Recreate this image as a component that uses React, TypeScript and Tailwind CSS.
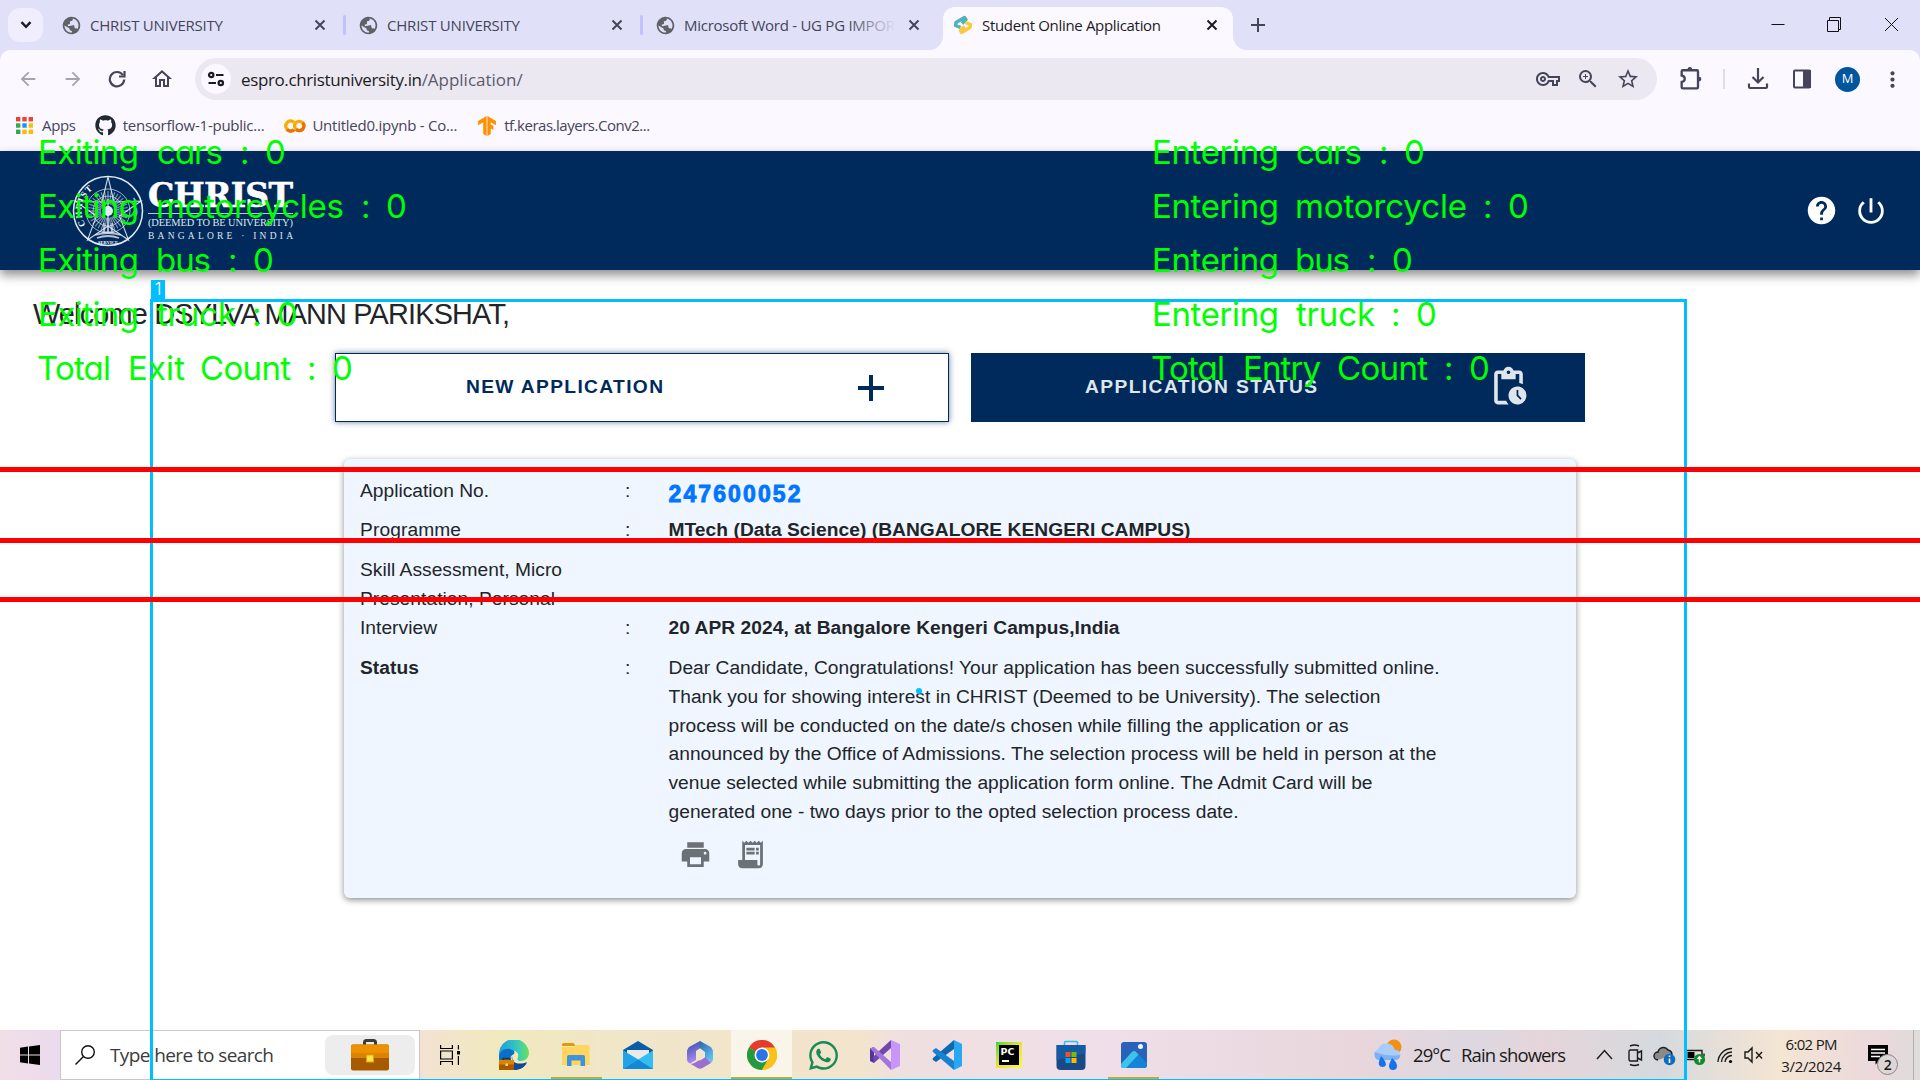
import { useLayoutEffect, useRef, useState, type ReactNode } from "react";
import {
  MdArrowBack,
  MdArrowForward,
  MdHelp,
  MdMoreVert,
  MdOutlineHome,
  MdOutlineVpnKey,
  MdPendingActions,
  MdPowerSettingsNew,
  MdPrint,
  MdPublic,
  MdReceiptLong,
  MdStarBorder,
  MdZoomIn,
} from "react-icons/md";
import { FaGithub, FaWhatsapp } from "react-icons/fa";
import { SiTensorflow } from "react-icons/si";

/** A single line of text tracked so that it spans exactly `w` pixels. */
function Fit({ w, className = "", children }: { w: number; className?: string; children: string }) {
  const ref = useRef<HTMLSpanElement>(null);
  const [spacing, setSpacing] = useState(0);
  useLayoutEffect(() => {
    const el = ref.current;
    if (!el) return;
    el.style.letterSpacing = "0px";
    const natural = el.getBoundingClientRect().width;
    const next = (w - natural) / Math.max(1, children.length - 1);
    el.style.letterSpacing = `${next}px`;
    setSpacing(next);
  }, [w, children]);
  return (
    <span ref={ref} className={`inline-block shrink-0 whitespace-pre ${className}`} style={{ letterSpacing: spacing }}>
      {children}
    </span>
  );
}

/* ---------- Browser chrome ---------- */

function CloseGlyph({ className }: { className: string }) {
  return (
    <svg viewBox="0 0 12 12" className={`size-3 shrink-0 ${className}`} fill="none" stroke="currentColor" strokeWidth="2">
      <path d="m1.500 1.500 9 9M10.500 1.500l-9 9" />
    </svg>
  );
}

function Tab({ title, w, fade }: { title: string; w: number; fade?: boolean }) {
  return (
    <div className="flex h-[50px] w-[294px] shrink-0 items-center pl-[12px] text-[#45455a]">
      <MdPublic className="size-[21px] -rotate-12 text-[#5f6368]" />
      <div className="relative ml-2 w-[212px] overflow-hidden text-[15px]">
        <Fit w={w}>{title}</Fit>
        {fade && <div className="absolute inset-y-0 right-0 w-12 bg-linear-to-r from-transparent to-[#e0e0f8]" />}
      </div>
      <CloseGlyph className="ml-[12px]" />
    </div>
  );
}

function TabStrip() {
  return (
    <div className="flex h-[50px] shrink-0 items-center bg-[#e0e0f8] pl-2">
      <div className="flex h-[34px] w-[35px] items-center justify-center rounded-xl bg-[#f0edff]">
        <svg viewBox="0 0 12 8" className="h-2 w-3" fill="none" stroke="#1b1b23" strokeWidth="2.4">
          <path d="M1.5 1.2 6 5.8l4.5-4.6" />
        </svg>
      </div>
      <div className="w-[6px]" />
      <Tab title="CHRIST UNIVERSITY" w={133} />
      <div className="h-5 w-[3px] rounded bg-[#c0c1ff]" />
      <Tab title="CHRIST UNIVERSITY" w={133} />
      <div className="h-5 w-[3px] rounded bg-[#c0c1ff]" />
      <Tab title="Microsoft Word - UG PG IMPOR" w={211} fade />
      <div className="relative mt-[7px] ml-[6px] flex h-[43px] w-[290px] items-center rounded-t-xl bg-[#fbf8ff] pb-[7px] pl-[10px] text-[#1b1b23]">
        <div className="absolute bottom-0 -left-[14px] size-[14px] bg-[#fbf8ff]">
          <div className="size-full rounded-br-[14px] bg-[#e0e0f8]" />
        </div>
        <div className="absolute -right-[14px] bottom-0 size-[14px] bg-[#fbf8ff]">
          <div className="size-full rounded-bl-[14px] bg-[#e0e0f8]" />
        </div>
        <svg viewBox="0 0 20 20" className="size-5" fill="none" strokeWidth="3.4" strokeLinejoin="round">
          <path d="M7.500 12.500 2.500 10.500 3 7.500 11.500 2.500 13 4.500 9 8.500" stroke="#4fb3bf" />
          <path d="m12.500 7.500 5 2-.5 3L8.500 17.500 7.500 15.500 11.500 11.500" stroke="#fdc83e" />
        </svg>
        <Fit w={179} className="ml-[9px] text-[15px]">
          Student Online Application
        </Fit>
        <CloseGlyph className="ml-[45px]" />
      </div>
      <svg viewBox="0 0 14 14" className="ml-[18px] size-[14px] shrink-0" stroke="#45455a" strokeWidth="2">
        <path d="M7 0v14M0 7h14" />
      </svg>
      <svg viewBox="0 0 140 20" className="ml-[499px] h-5 w-[140px] shrink-0" fill="none" stroke="#111">
        <path d="M7.5 9.5h13M63.5 5.5h11v11h-11zM65.5 5.5v-3h11v12h-2M121 3l13 13M134 3l-13 13" />
      </svg>
    </div>
  );
}

function Toolbar() {
  return (
    <div className="flex h-[58px] shrink-0 items-center rounded-t-[10px] bg-[#fbf8ff] text-[#45455a]">
      <MdArrowBack className="ml-[17px] size-[22px] text-[#a5a3b0]" />
      <MdArrowForward className="ml-[23px] size-[22px] text-[#a5a3b0]" />
      <svg viewBox="0 0 18 18" className="ml-[24px] size-[18px] shrink-0" fill="none" stroke="currentColor" strokeWidth="2.200">
        <path d="M15 5.200A7.200 7.200 0 1 0 16.200 9.500" />
        <path d="M16.500 1v5.500H11" />
      </svg>
      <MdOutlineHome className="ml-[24px] size-[24px] shrink-0" />
      <div className="ml-[21px] flex h-[42px] w-[1462px] shrink-0 items-center rounded-full bg-[#ebe8f2]">
        <div className="ml-[6px] flex size-[30px] shrink-0 items-center justify-center rounded-full bg-[#fbf8ff]">
          <svg viewBox="0 0 18 16" className="h-4 w-[18px]" fill="none" stroke="#1b1b23" strokeWidth="2.2">
            <circle cx="4.2" cy="4" r="2.2" />
            <path d="M9 4h7.5M1.5 12H9" />
            <circle cx="13.8" cy="12" r="2.2" />
          </svg>
        </div>
        <div className="mt-[2px] ml-[10px] flex w-[283px] shrink-0 text-[17px] leading-6">
          <Fit w={181} className="text-[#1b1b23]">
            espro.christuniversity.in
          </Fit>
          <Fit w={101} className="text-[#5c5a6b]">
            /Application/
          </Fit>
        </div>
        <MdOutlineVpnKey className="ml-[1012px] size-6 shrink-0" />
        <MdZoomIn className="ml-[16px] size-6 shrink-0" />
        <MdStarBorder className="ml-[16px] size-6 shrink-0" />
      </div>
      <svg viewBox="0 0 24 24" className="ml-[20px] size-[28px] shrink-0" fill="none" stroke="currentColor" strokeWidth="2">
        <path d="M5 4.500h12a1 1 0 0 1 1 1V19a1 1 0 0 1-1 1H5a1 1 0 0 1-1-1v-4.500c3.500-.5 3.500-5 0-5.500V5.500a1 1 0 0 1 1-1z" />
        <path d="M9 4a2 2.300 0 0 1 4 0zM18.500 10a2.300 2 0 0 1 0 4z" fill="currentColor" stroke="none" />
      </svg>
      <div className="ml-[18px] h-5 w-[2px] shrink-0 bg-[#dcdcf8]" />
      <svg viewBox="0 0 22 22" className="ml-[22px] size-[22px] shrink-0" fill="none" stroke="currentColor" strokeWidth="2.2">
        <path d="M11 0v14M5.500 9l5.500 5.500L16.500 9M2 15.500V19a1 1 0 0 0 1 1h16a1 1 0 0 0 1-1v-3.500" />
      </svg>
      <svg viewBox="0 0 20 20" className="ml-[23px] size-5 shrink-0" fill="none" stroke="currentColor" strokeWidth="2">
        <rect x="2" y="1.500" width="16" height="17" rx="1" />
        <path d="M12 2h6v16h-6z" fill="currentColor" />
      </svg>
      <div className="ml-[23px] flex size-[25px] shrink-0 items-center justify-center rounded-full bg-[#00569e] text-[13px] text-white">
        M
      </div>
      <MdMoreVert className="ml-[20px] size-[25px] shrink-0" />
    </div>
  );
}

function Bookmarks() {
  const dots = ["#ea4335", "#ea4335", "#ea4335", "#34a853", "#1a90ff", "#fbbc04", "#34a853", "#fbbc04", "#fbbc04"];
  return (
    <div className="flex h-[43px] shrink-0 items-center bg-[#fbf8ff] pb-[8px] text-[15px] text-[#45455a]">
      <svg viewBox="0 0 17 17" className="ml-[16px] size-[17px]">
        {dots.map((c, i) => (
          <rect key={i} x={(i % 3) * 6.3} y={Math.floor(i / 3) * 6.3} width="4.400" height="4.400" fill={c} />
        ))}
      </svg>
      <Fit w={34} className="ml-[9px]">
        Apps
      </Fit>
      <FaGithub className="ml-[19px] size-[21px] text-[#24292f]" />
      <Fit w={142} className="ml-[7px]">
        tensorflow-1-public...
      </Fit>
      <svg viewBox="0 0 22 14" className="ml-[20px] h-[14px] w-[22px]" fill="none" strokeWidth="3.400">
        <path d="M10 3.200A5 5 0 1 0 10 10.800" stroke="#f9ab00" />
        <circle cx="15.200" cy="7" r="4.600" stroke="#f9ab00" />
        <path d="M12 10.300A4.600 4.600 0 0 0 18.500 3.700M3 10.300a5 5 0 0 0 7 .5" stroke="#e8710a" />
      </svg>
      <Fit w={145} className="ml-[6px]">
        Untitled0.ipynb - Co...
      </Fit>
      <SiTensorflow className="ml-[20px] size-5 text-[#ff9100]" />
      <Fit w={146} className="ml-[7px]">
        tf.keras.layers.Conv2...
      </Fit>
    </div>
  );
}

/* ---------- University portal ---------- */

function Seal() {
  const rays = Array.from({ length: 36 }, (_, i) => i * 10);
  return (
    <svg viewBox="-36 -36 72 72" className="size-[72px] shrink-0" fill="none" stroke="#e4eaf2">
      <circle r="34.500" strokeWidth="1.500" />
      <circle r="22" strokeWidth="0.900" opacity="0.8" />
      <circle r="15" strokeWidth="0.800" opacity="0.8" />
      {rays.map((a) => (
        <path key={a} d="M0-7V-20" strokeWidth="1.200" opacity="0.55" transform={`rotate(${a})`} />
      ))}
      <path d="M0-34 6-9 33-10 11.500 5 20.500 29 0 15-20.500 29-11.500 5-33-10-6-9z" strokeWidth="1.100" opacity="0.9" />
      <path d="M0-12v24M-4 12v9M0 12v9M4 12v9M-6 21H6" strokeWidth="1.200" />
      <circle r="5" fill="#e4eaf2" stroke="none" />
      <path d="M-13 24q13-4 26 0M-11 27q11-4 22 0" strokeWidth="1.800" opacity="0.8" />
      <path id="sealLeft" d="M-22.500 14A26.500 26.500 0 0 1-12-23.600" stroke="none" />
      <g fill="#fff" stroke="none" fontFamily="Liberation Serif" fontWeight="700" fontSize="9">
        <text>
          <textPath href="#sealLeft" textLength="40">
            CHRIST
          </textPath>
        </text>
        <text y="32.500" fontSize="4.500" textAnchor="middle">
          SERVICE
        </text>
      </g>
      <path d="M25.500-13q4 4 1 8M28-3q2 5-1 9" strokeWidth="1.600" opacity="0.7" />
    </svg>
  );
}

function PortalHeader() {
  return (
    <header className="z-10 flex h-[119px] shrink-0 items-center bg-[#002a5c] pl-[72px] text-white shadow-[0_5px_10px_rgba(0,0,0,0.45)]">
      <Seal />
      <div className="mt-[2px] ml-1 flex w-[146px] shrink-0 flex-col items-start font-['DejaVu_Serif',serif]">
        <Fit w={145} className="text-[33px] leading-[30px] font-bold [-webkit-text-stroke:0.6px_white]">
          CHRIST
        </Fit>
        <div className="mt-[2px] h-px w-[145px] bg-[#b8c6d8]" />
        <Fit w={145} className="mt-[1px] font-['Liberation_Serif',serif] text-[10.400px] leading-[15px] text-[#dfe6ee]">
          (DEEMED TO BE UNIVERSITY)
        </Fit>
        <Fit w={145} className="font-['Liberation_Serif',serif] text-[9.500px] leading-[12px] text-[#dfe6ee]">
          BANGALORE · INDIA
        </Fit>
      </div>
      <MdHelp className="ml-[1511px] size-[33px] shrink-0" />
      <MdPowerSettingsNew className="ml-[16px] size-[34px] shrink-0" />
    </header>
  );
}

const statusLines: [string, number][] = [
  ["Dear Candidate, Congratulations! Your application has been successfully submitted online.", 771],
  ["Thank you for showing interest in CHRIST (Deemed to be University). The selection", 712],
  ["process will be conducted on the date/s chosen while filling the application or as", 680],
  ["announced by the Office of Admissions. The selection process will be held in person at the", 768],
  ["venue selected while submitting the application form online. The Admit Card will be", 704],
  ["generated one - two days prior to the opted selection process date.", 570],
];

function Row({
  label,
  colonClass = "",
  className,
  children,
}: {
  label: ReactNode;
  colonClass?: string;
  className: string;
  children: ReactNode;
}) {
  return (
    <div className={`flex shrink-0 ${className}`}>
      <div className="flex w-[265px] flex-col items-start">{label}</div>
      <span className={`w-[43.500px] shrink-0 ${colonClass}`}>:</span>
      {children}
    </div>
  );
}

function Portal() {
  return (
    <div className="flex h-[879px] shrink-0 flex-col bg-white font-['Liberation_Sans',Arial,sans-serif] text-[#212529]">
      <PortalHeader />
      <Fit w={477} className="mt-[28px] ml-[33px] self-start text-[28.8px] leading-8">
        Welcome DSYLVA MANN PARIKSHAT,
      </Fit>
      <div className="mt-[23px] ml-[335px] flex gap-[22px] text-[19.2px] font-bold">
        <div className="flex h-[69px] w-[614px] items-center border border-[#002a5c] bg-white pl-[130px] text-[#002a5c] shadow-[0_0_6px_rgba(0,42,92,0.6)]">
          <Fit w={197}>NEW APPLICATION</Fit>
          <svg viewBox="0 0 26 26" className="ml-[194px] size-[26px]" stroke="currentColor" strokeWidth="4">
            <path d="M13 0v26M0 13h26" />
          </svg>
        </div>
        <div className="flex h-[69px] w-[614px] items-center bg-[#002a5c] pl-[114px] text-[#dee6ec]">
          <Fit w={232}>APPLICATION STATUS</Fit>
          <MdPendingActions className="mb-[2px] ml-[169px] size-[43px]" />
        </div>
      </div>
      <div className="mt-[37px] ml-[344px] flex h-[439px] w-[1232px] flex-col rounded-md bg-[#eff6ff] pt-[18px] pl-[16px] text-[19.2px] leading-[28.8px] shadow-[0_2px_6px_rgba(0,0,0,0.45)]">
        <Row className="h-[39px]" label={<Fit w={129}>Application No.</Fit>}>
          <Fit w={132} className="-mt-px text-[23px] leading-[36px] font-bold text-[#0075ff] [-webkit-text-stroke:0.9px_#0075ff]">
            247600052
          </Fit>
        </Row>
        <Row className="h-[40px]" label={<Fit w={101}>Programme</Fit>}>
          <Fit w={522} className="font-bold">
            MTech (Data Science) (BANGALORE KENGERI CAMPUS)
          </Fit>
        </Row>
        <Row
          className="h-[98px]"
          colonClass="mt-[58px]"
          label={
            <>
              <Fit w={202}>Skill Assessment, Micro</Fit>
              <Fit w={195}>Presentation, Personal</Fit>
              <Fit w={77}>Interview</Fit>
            </>
          }
        >
          <Fit w={451} className="mt-[58px] font-bold">
            20 APR 2024, at Bangalore Kengeri Campus,India
          </Fit>
        </Row>
        <Row className="h-[173px]" label={<Fit w={59} className="font-bold">Status</Fit>}>
          <div className="flex flex-col items-start">
            {statusLines.map(([line, w]) => (
              <Fit key={line} w={w}>
                {line}
              </Fit>
            ))}
          </div>
        </Row>
        <div className="mt-[11px] ml-[319px] flex gap-[22px] text-[#6c7077]">
          <MdPrint className="size-[33px]" />
          <MdReceiptLong className="size-[33px]" />
        </div>
      </div>
    </div>
  );
}

/* ---------- Windows taskbar ---------- */

function TaskApp({ w, active, children, bar }: { w: string; active?: boolean; bar?: boolean; children: ReactNode }) {
  return (
    <div className={`flex h-[50px] shrink-0 flex-col items-center ${w} ${active ? "bg-[#faf5ea]" : ""}`}>
      <div className="flex h-[47px] items-center justify-center pt-[3px]">{children}</div>
      {bar && <div className={`h-[3px] bg-[#c8aa28] ${active ? "w-full" : "w-[51px]"}`} />}
    </div>
  );
}

function Taskbar() {
  return (
    <div className="flex h-[50px] w-[1920px] shrink-0 items-center bg-[linear-gradient(90deg,#f0dfe6_0,#ecdaf0_60px,#f3e2d2_420px,#f1e9be_500px,#f0e6c8_600px,#f3e4cd_860px,#f0dfe0_900px,#f0dfe8_1100px,#e8d6dc_1360px,#dcd7e0_1480px,#e6d5da_1540px,#d5d9dd_1660px,#e6dfd8_1720px,#f4e5d3_1780px,#ead8dc_1880px,#dfdcda_1920px)] text-[#1a1a1a]">
      <svg viewBox="0 0 20 20" className="ml-5 size-5 shrink-0" fill="#000">
        <path d="M0 2.800 8 1.500V9.500H0zM9 1.400 20 0v9.500H9zM0 10.500h8v8L0 17.200zM9 10.500h11V20L9 18.600z" />
      </svg>
      <div className="ml-5 flex h-[50px] w-[360px] shrink-0 items-center border border-[#c8c8c8] bg-white">
        <svg viewBox="0 0 20 20" className="ml-[14px] size-5 shrink-0" fill="none" stroke="#111" strokeWidth="1.400">
          <circle cx="13" cy="7" r="6.300" />
          <path d="M8.500 11.500.5 19.500" />
        </svg>
        <Fit w={164} className="ml-[15px] text-[19px] text-[#3b3b3b]">
          Type here to search
        </Fit>
        <div className="ml-[52px] flex h-10 w-[90px] shrink-0 items-center justify-center rounded-lg bg-[#ededed]">
          <svg viewBox="0 0 38 32" className="mb-[1px] h-8 w-[38px]">
            <path d="M13.500 6V3.500A2 2 0 0 1 15.500 1.500h7a2 2 0 0 1 2 2V6" fill="none" stroke="#3a3a3c" strokeWidth="3" />
            <rect y="5.500" width="38" height="26" rx="2" fill="#a85a00" />
            <path d="M0 7.500a2 2 0 0 1 2-2h34a2 2 0 0 1 2 2V19H0z" fill="#ee9100" />
            <path d="M0 14h38v5H0z" fill="#dc8303" />
            <rect x="15.500" y="16" width="7" height="7" fill="#ffe14a" stroke="#d8ab00" />
          </svg>
        </div>
      </div>
      <svg viewBox="0 0 20 20" className="ml-5 size-5 shrink-0" fill="none" stroke="#000" strokeWidth="1.200">
        <path d="M.6 0v3.500h11.800V0M.6 20v-3.500h11.800V20M.6 6h11.800v8H.6zM18.400 0v4.500M18.400 11v9" />
        <path d="M17 6h3v3.500h-3z" fill="#000" stroke="none" />
      </svg>
      <div className="w-[23px] shrink-0" />
      <TaskApp w="w-[62px]">
        <svg viewBox="0 0 30 30" className="size-[30px]">
          <defs>
            <linearGradient id="edgeA" x1="0" x2="1">
              <stop offset="0" stopColor="#1b9de2" />
              <stop offset="0.600" stopColor="#36c8c0" />
              <stop offset="1" stopColor="#6ce05a" />
            </linearGradient>
          </defs>
          <path d="M0 15A15 15 0 0 1 30 13c0 5-4 8-8 8-4 0-4-2-3-4 1-3-1-6-5-6C6 11 1 14 0 20z" fill="url(#edgeA)" />
          <path d="M0 18C0 11 6 8 11 9c4 1 5 3 4 5-6 2-5 11 2 12 4 .6 8-.5 11-3-3 5-8 7-13 7C6 30 0 25 0 18z" fill="#0b6fc4" />
          <path d="M13 16c-2 6 6 10 15 6-3 6-8 8-13 8z" fill="#134a8e" />
          <path d="M4 20v-1.500h7V20" fill="none" stroke="#333" strokeWidth="1.500" />
          <rect y="20" width="15" height="10" fill="#a85a00" />
          <rect y="20" width="15" height="4.500" fill="#d98206" />
          <rect x="6.500" y="23.500" width="2.500" height="2.500" fill="#ffe14a" />
        </svg>
      </TaskApp>
      <TaskApp w="w-[62px]" bar>
        <svg viewBox="0 0 28 24" className="h-6 w-7">
          <path d="M0 1.500A1.500 1.500 0 0 1 1.500 0h10l2 3H0z" fill="#df9c06" />
          <path d="M0 4h12l2-2h12a1.500 1.500 0 0 1 1.500 1.500V22H0z" fill="#ffd560" />
          <path d="M5 14a2 2 0 0 1 2-2h14a2 2 0 0 1 2 2v9h-4.500v-5.500h-9V23H5z" fill="#3c93dc" />
        </svg>
      </TaskApp>
      <TaskApp w="w-[62px]">
        <svg viewBox="0 0 30 28" className="h-7 w-[30px]">
          <path d="M0 9 15 0l15 9v3H0z" fill="#0a5ca8" />
          <path d="M4 9h22v9H4z" fill="#e9eaec" />
          <path d="M0 9.500 15 18.500 30 9.500V28H0z" fill="#35bdf2" />
          <path d="M0 28 15 18.500 30 28z" fill="#1488d8" />
          <path d="M0 9.500 15 18.500 0 28z" fill="#23a3e6" />
        </svg>
      </TaskApp>
      <TaskApp w="w-[62px]">
        <svg viewBox="0 0 26 28" className="h-7 w-[26px]">
          <defs>
            <linearGradient id="hubA" x1="0" y1="0" x2="0.3" y2="1">
              <stop offset="0" stopColor="#2c4fa8" />
              <stop offset="1" stopColor="#b18af0" />
            </linearGradient>
            <linearGradient id="hubB" x1="0" x2="0.600" y2="1">
              <stop offset="0" stopColor="#2c5fb0" />
              <stop offset="1" stopColor="#5fc4f2" />
            </linearGradient>
          </defs>
          <path d="M13 0 3 5.500Q0 7.500 0 11v7q0 3 3 4.500L9 19v-9l6-4z" fill="url(#hubA)" />
          <path d="m13 0 10 5.500q3 2 3 5.500v7q0 2-2 4l-6-5v-6l-6-4.500z" fill="url(#hubB)" />
          <path d="M24 22 15.500 27q-2.500 1.500-5 0L3 22.500q3 1 6-1.500l9-5z" fill="#9b6fd0" />
          <path d="m9 11 4-2.500 4.500 2.800v5.400L13 19.500 9 17z" fill="#f1e6ca" />
        </svg>
      </TaskApp>
      <TaskApp w="w-[61px]" active bar>
        <svg viewBox="-15 -15 30 30" className="size-[30px]">
          <circle r="15" fill="#fbc116" />
          <path d="M0 0-13-7.500A15 15 0 0 1 13-7.500z" fill="#e33b2e" />
          <path d="M-13-7.500A15 15 0 0 0 0 15L6.500 3.700 0 0z" fill="#249a41" />
          <path d="M0-7.500H13A15 15 0 0 1 0 15L6.500 3.700z" fill="#fbc116" />
          <circle r="7.500" fill="#fff" />
          <circle r="5.900" fill="#2a74e8" />
        </svg>
      </TaskApp>
      <TaskApp w="w-[62px]">
        <FaWhatsapp className="size-[33px] text-[#178a55]" />
      </TaskApp>
      <TaskApp w="w-[62px]">
        <svg viewBox="0 0 30 30" className="size-[30px]">
          <path d="M0 8.500 4 7v16l-4-2z" fill="#52359a" />
          <path d="M4 23 21 8V0L9 11 3 17z" fill="#7048b0" />
          <path d="M4 7 21 22v8L0 8.500z" fill="#a376dd" />
          <path d="m21 0 9 4v22l-9 4z" fill="#c896fa" />
        </svg>
      </TaskApp>
      <TaskApp w="w-[62px]">
        <svg viewBox="0 0 30 30" className="size-[30px]">
          <path d="M22 0v9L4 22 1 20a1.500 1.500 0 0 1 0-2z" fill="#0a68b4" />
          <path d="M22 30v-9L4 8 1 10a1.500 1.500 0 0 0 0 2z" fill="#1583cf" />
          <path d="m22 0 8 4v22l-8 4z" fill="#2aa7f2" />
        </svg>
      </TaskApp>
      <TaskApp w="w-[62px]">
        <div className="flex size-[26px] items-center justify-center bg-linear-to-br from-[#21d737] via-[#e8e337] to-[#fcf84a]">
          <div className="flex size-[20px] flex-col items-start bg-black pt-[1px] pl-[1.500px] font-['DejaVu_Sans',sans-serif] text-[9.500px] leading-[11px] font-bold text-white">
            PC
            <div className="mt-[3px] ml-px h-[1.500px] w-[7px] bg-white" />
          </div>
        </div>
      </TaskApp>
      <TaskApp w="w-[61px]">
        <svg viewBox="0 0 30 30" className="size-[30px]">
          <path d="M8.500 6V2.500a1 1 0 0 1 1-1h11a1 1 0 0 1 1 1V6" fill="none" stroke="#2cc0f5" strokeWidth="1.600" />
          <path d="M.500 5h29v21a4 4 0 0 1-4 4h-21a4 4 0 0 1-4-4z" fill="#1a4a86" />
          <path d="M.500 5h29v8L.500 20z" fill="#1160ac" opacity="0.800" />
          <path d="M9.500 12h5v5h-5z" fill="#f25022" />
          <path d="M15.500 12h5v5h-5z" fill="#7fba00" />
          <path d="M9.500 18h5v5h-5z" fill="#00a4ef" />
          <path d="M15.500 18h5v5h-5z" fill="#ffb900" />
        </svg>
      </TaskApp>
      <TaskApp w="w-[65px]" bar>
        <svg viewBox="0 0 26 26" className="size-[26px]">
          <rect width="26" height="26" rx="3" fill="#2a62b8" />
          <path d="M0 22 11 10q2-1.800 4 0l11 11v2a3 3 0 0 1-3 3H3a3 3 0 0 1-3-3z" fill="#1583d8" />
          <path d="M0 22 11 10q2-1.800 4 0l2.500 2.500L5 26H3a3 3 0 0 1-3-3z" fill="#3cc3f0" />
          <circle cx="19.500" cy="4.500" r="2.500" fill="#eef3fa" />
        </svg>
      </TaskApp>

      <svg viewBox="0 0 32 32" className="ml-[206px] size-8 shrink-0">
        <circle cx="22" cy="8" r="7.500" fill="#f58f12" />
        <path d="M6 21a6 6 0 0 1 0-11 9 9 0 0 1 17 1 5 5 0 0 1 1 10z" fill="#a9cdf8" />
        <path d="M6 21a6 6 0 0 1-3-8q12 5 25 3a5 5 0 0 1-4 5z" fill="#7fb0f2" />
        <path d="M9 17c3 3 5 6 5 9a4 4 0 0 1-7 0c-1-3 1-6 2-9zM20 19c3 3 5 5 5 8a4 4 0 0 1-8 0c0-3 2-5 3-8z" fill="#1473f0" />
      </svg>
      <Fit w={38} className="ml-[9px] text-[18.500px]">
        29°C
      </Fit>
      <Fit w={105} className="ml-[11px] text-[18.500px]">
        Rain showers
      </Fit>
      <svg viewBox="0 0 180 30" className="ml-[27px] h-[30px] w-[180px] shrink-0" fill="none" stroke="#1a1a1a" strokeWidth="1.400">
        <path d="m5 19 7.500-8.500L20 19" />
        <path d="M38.500 10h7v11h-7a1.500 1.500 0 0 1-1.500-1.500v-8A1.500 1.500 0 0 1 38.500 10zM45.500 13l4-2v9l-4-2M38 6q4.500-2 9 0M38 24.500q4.500 2 9 0" />
        <path d="M66 20a4 4 0 0 1 0-8 5.500 5.500 0 0 1 10-2 5 5 0 0 1 4 5" fill="#8a8a8a" />
        <circle cx="77.500" cy="19.500" r="5.800" fill="#0f6cbd" stroke="none" />
        <path d="M77.500 18.500v4.500M77.500 15.500v1.500" stroke="#fff" strokeWidth="1.600" />
        <path d="M94 10.500h16v9H94zM112 13.500v3" />
        <path d="M95.500 12h7v6h-7z" fill="#000" stroke="none" />
        <circle cx="107.500" cy="19.500" r="5.600" fill="#0f8a2c" stroke="none" />
        <path d="M107.500 22.500v-5M105.500 19l2-2.200 2 2.200" stroke="#fff" />
        <path d="M126 22A14 14 0 0 1 140 8.500M129.500 22A10.500 10.500 0 0 1 140 12M133 22a7 7 0 0 1 7-6.500" />
        <circle cx="138.500" cy="21.500" r="1.600" fill="#000" stroke="none" />
        <path d="M153 12h3l4-4v14l-4-4h-3zM164 12l6 6.500M170 12l-6 6.500" />
      </svg>
      <div className="ml-[9px] flex w-[60px] shrink-0 flex-col items-center pb-[1px] text-[15px] leading-[22px]">
        <Fit w={52}>6:02 PM</Fit>
        <Fit w={60}>3/2/2024</Fit>
      </div>
      <div className="relative ml-[27px] h-[30px] w-[31px] shrink-0">
        <svg viewBox="0 0 20 20" className="mt-[5px] size-5">
          <path d="M0 0h20v16h-9l-3.500 3.500V16H0z" fill="#000" />
          <path d="M3 4.500h14M3 8h14M3 11.500h9" stroke="#fff" strokeWidth="1.400" />
        </svg>
        <div className="absolute top-[14px] left-[9px] flex size-[21px] items-center justify-center rounded-full border border-[#8a8585] bg-[#dcd6d6] text-[14px] font-semibold">
          2
        </div>
      </div>
      <div className="ml-[14px] h-full w-px shrink-0 bg-[#b9aeae]" />
    </div>
  );
}

/* ---------- Vehicle counting overlay ---------- */

type Word = [text: string, x: number, w: number];

const counters: { y: number; words: Word[] }[] = [
  { y: 164, words: [["Exiting", 38, 101], ["cars", 157, 66], [":", 240, 8], ["0", 265, 20], ["Entering", 1152, 127], ["cars", 1296, 66], [":", 1379, 8], ["0", 1404, 20]] },
  { y: 218, words: [["Exiting", 38, 101], ["motorcycles", 156, 188], [":", 361, 8], ["0", 386, 20], ["Entering", 1152, 127], ["motorcycle", 1295, 172], [":", 1483, 8], ["0", 1508, 20]] },
  { y: 272, words: [["Exiting", 38, 101], ["bus", 156, 55], [":", 228, 8], ["0", 253, 20], ["Entering", 1152, 127], ["bus", 1295, 55], [":", 1367, 8], ["0", 1392, 20]] },
  { y: 326, words: [["Exiting", 38, 101], ["truck", 157, 79], [":", 252, 8], ["0", 277, 20], ["Entering", 1152, 127], ["truck", 1296, 79], [":", 1391, 8], ["0", 1416, 20]] },
  { y: 380, words: [["Total", 37, 74], ["Exit", 128, 57], ["Count", 200, 91], [":", 307, 8], ["0", 332, 20], ["Total", 1151, 74], ["Entry", 1243, 78], ["Count", 1337, 91], [":", 1444, 8], ["0", 1469, 20]] },
];

function DetectionOverlay() {
  return (
    <div className="pointer-events-none absolute inset-0 z-20">
      <div className="absolute top-[299px] left-[150px] h-[781px] w-[1537px] border-3 border-b-1 border-[#00bfff]" />
      <div className="absolute top-[280px] left-[151px] flex h-[20px] w-[14px] items-center justify-center bg-[#00bfff] font-['Inter',sans-serif] text-[17px] font-light text-white">
        1
      </div>
      <div className="absolute top-[688px] left-[916px] size-[6px] rounded-full bg-[#00bfff]" />
      <div className="absolute top-[467px] h-[5px] w-full bg-[#ff0000]" />
      <div className="absolute top-[538px] h-[5px] w-full bg-[#ff0000]" />
      <div className="absolute top-[597px] h-[5px] w-full bg-[#ff0000]" />
      {counters.flatMap(({ y, words }) =>
        words.map(([text, x, w]) => (
          <div
            key={`${y}-${x}`}
            className="absolute font-['Inter',sans-serif] text-[33px] leading-10 text-[#00ff00] [font-feature-settings:'cv11','ss03']"
            style={{ left: x, top: y - 32 }}
          >
            <Fit w={w}>{text}</Fit>
          </div>
        )),
      )}
    </div>
  );
}

export default function App() {
  return (
    <div className="relative flex h-[1080px] w-[1920px] flex-col overflow-hidden bg-[#e0e0f8] font-['Open_Sans','Noto_Sans',sans-serif]">
      <TabStrip />
      <Toolbar />
      <Bookmarks />
      <Portal />
      <Taskbar />
      <DetectionOverlay />
    </div>
  );
}
